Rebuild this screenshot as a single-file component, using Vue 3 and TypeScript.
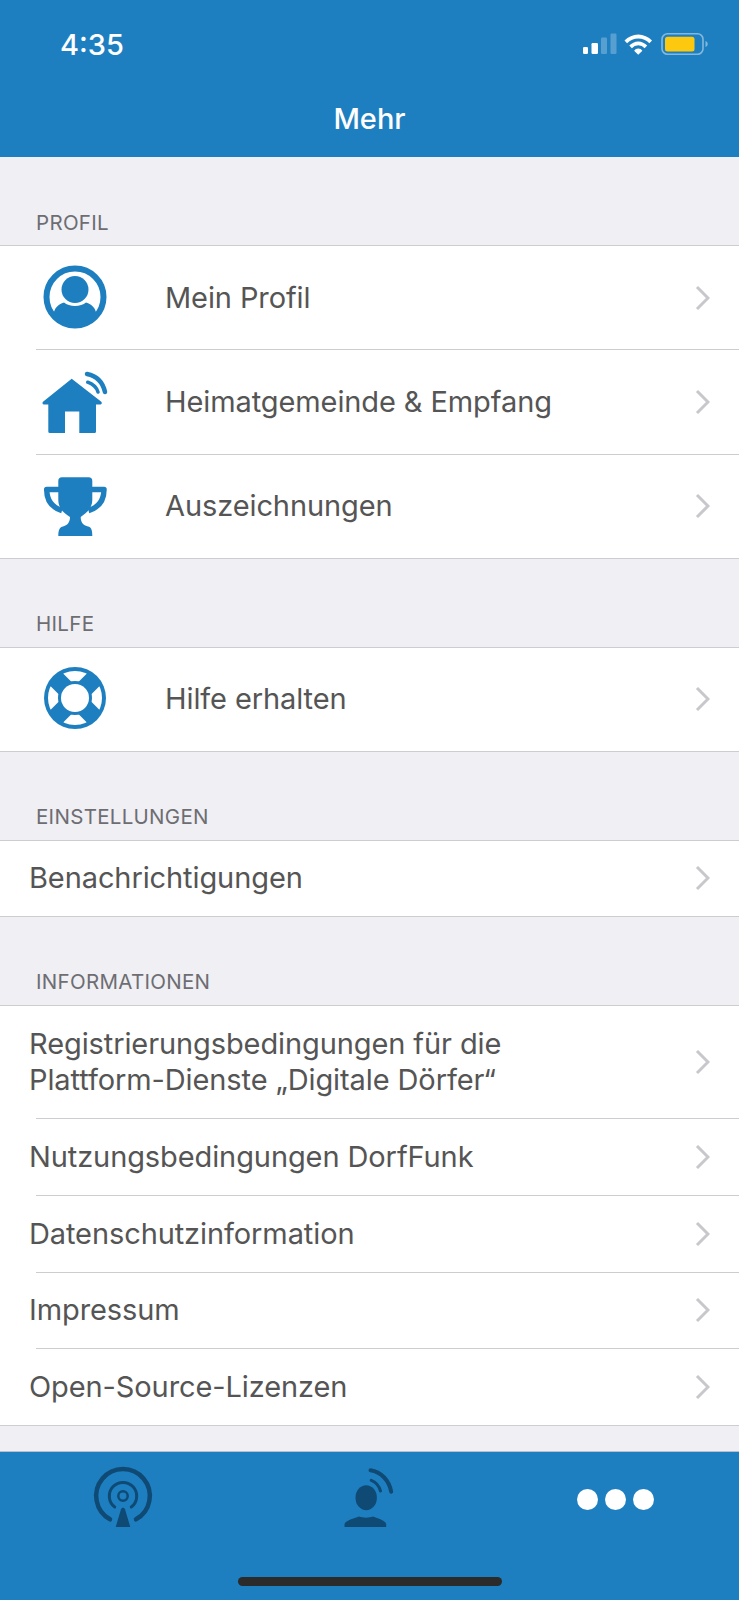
<template>
  <div class="screen">
    <header class="top">
      <div class="status">
        <span class="status__time">4:35</span>
        <svg class="status__icons" width="126" height="24" viewBox="0 0 126 24">
          <rect x="0" y="14" width="5" height="7" rx="1.2" fill="#fff" />
          <rect x="8.5" y="10" width="6.5" height="11" rx="1.2" fill="#fff" />
          <rect x="18" y="4.5" width="6" height="16.5" rx="1.2" fill="#fff" opacity="0.25" />
          <rect x="27.5" y="0.5" width="6" height="20.5" rx="1.2" fill="#fff" opacity="0.25" />
          <g transform="translate(-1.5 0)" fill="#fff">
            <path d="M43 7.5a19 19 0 0 1 27.5 0l-2.6 2.8a15.2 15.2 0 0 0-22.3 0z" />
            <path d="M47.8 12.6a12 12 0 0 1 17.9 0l-2.6 2.7a8.3 8.3 0 0 0-12.7 0z" />
            <path d="M52.6 17.7a5 5 0 0 1 8.3 0l-4.15 4.1z" />
          </g>
          <rect x="79" y="0.8" width="41" height="20.4" rx="5.5" fill="none" stroke="#fff" stroke-opacity="0.45" stroke-width="1.6" />
          <rect x="82" y="3.7" width="29.5" height="14.8" rx="2.5" fill="#fdc90e" />
          <path d="M122.5 8v6c1.4-.5 2.2-1.6 2.2-3s-.8-2.500-2.2-3z" fill="#fff" fill-opacity="0.45" />
        </svg>
      </div>
      <h1 class="top__title">Mehr</h1>
    </header>

    <main class="content">
      <section v-for="section in sections" :key="section.title">
        <h2 class="section-title">{{ section.title }}</h2>
        <ul class="group">
          <li
            v-for="row in section.rows"
            :key="row.label"
            class="row"
            :class="{ 'row--icon': row.icon, 'row--tall': row.label.includes('\n') }"
          >
            <svg v-if="row.icon === 'profile'" class="row__icon" viewBox="0 1 64 64">
              <circle cx="32" cy="32" r="28.5" fill="none" stroke="#1e7fc0" stroke-width="6" />
              <circle cx="32" cy="24.500" r="13.500" fill="#1e7fc0" />
              <path d="M10.500 50C11 43 15 39.500 21 37.500 26 42 38 42 43 37.500 49 39.500 53 43 53.500 50A27 27 0 0 1 10.500 50Z" fill="#1e7fc0" />
            </svg>
            <svg v-else-if="row.icon === 'home'" class="row__icon" viewBox="0 0 64 64">
              <path d="M28.700 8.800 58 31.500c1.500 1.500.7 3-1 3h-4V61.500a1.500 1.500 0 0 1-1.500 1.500H36.300V41.500H22V63H6.800a1.500 1.500 0 0 1-1.500-1.500V34.500h-4c-1.700 0-2.500-1.500-1-3Z" fill="#1e7fc0" />
              <path d="M44 4C54 6 60 13 62 22" fill="none" stroke="#1e7fc0" stroke-width="4.500" stroke-linecap="round" />
              <path d="M44.700 12.200C50 14 53.500 17.500 55 22" fill="none" stroke="#1e7fc0" stroke-width="3.500" stroke-linecap="round" />
            </svg>
            <svg v-else-if="row.icon === 'trophy'" class="row__icon" viewBox="0 0 64 64">
              <path d="M19 3.300H45.600A3.700 3.700 0 0 1 49.300 7V26C49.300 35 42 40 37.700 43 37.700 47 39 51 45 52.500 48 53 49.300 55.500 49.300 62H15.300C15.300 55.500 17 53 20 52.500 25.500 51 27 47 27 43 22 40 15.300 35 15.300 26V7A3.700 3.700 0 0 1 19 3.300Z" fill="#1e7fc0" />
              <path d="M16 15.500H3.700C3.700 27 9 33.500 19 36.500M48.500 15.500H61C61 27 55.500 33.500 45.500 36.500" fill="none" stroke="#1e7fc0" stroke-width="5.500" stroke-linejoin="round" />
            </svg>
            <svg v-else-if="row.icon === 'help'" class="row__icon" viewBox="0 1 64 64">
              <circle cx="32" cy="32" r="31" fill="#1e7fc0" />
              <circle cx="32" cy="32" r="22" fill="none" stroke="#fff" stroke-width="10" />
              <path d="M12 12 52 52M52 12 12 52" stroke="#1e7fc0" stroke-width="18" />
              <circle cx="32" cy="32" r="14" fill="#fff" />
            </svg>
            <span class="row__label">{{ row.label }}</span>
            <svg class="row__chevron" width="15" height="26" viewBox="0 0 15 26">
              <path d="M2 2l11 11L2 24" fill="none" stroke="#c7c7cc" stroke-width="3" />
            </svg>
          </li>
        </ul>
      </section>
    </main>

    <footer class="tabs">
      <div class="tabs__row">
        <button class="tab" type="button" aria-label="Funk">
          <svg width="64" height="64" viewBox="0 0 64 64">
            <path d="M19 55.300A26.800 26.800 0 1 1 45 55.300" fill="none" stroke="#0f4a75" stroke-width="4.500" stroke-linecap="round" />
            <path d="M23.700 43A13.700 13.700 0 1 1 40.300 43" fill="none" stroke="#0f4a75" stroke-width="3" stroke-linecap="round" />
            <circle cx="32" cy="32" r="4.700" fill="none" stroke="#0f4a75" stroke-width="2.500" />
            <path d="M32 43.700c1 0 1.600.6 2 1.600L39.300 63H24.700L30 45.300c.4-1 1-1.600 2-1.600Z" fill="#0f4a75" />
          </svg>
        </button>
        <button class="tab" type="button" aria-label="Meine Beiträge">
          <svg width="64" height="64" viewBox="0 0 64 64">
            <ellipse cx="29.200" cy="33.700" rx="10.700" ry="12.500" fill="#0f4a75" />
            <path d="M7.500 63V60C9 56 17 54.500 22 52.500 26 54 32 54 36 52.500 41 54.500 48 56 49.200 60V63Z" fill="#0f4a75" />
            <path d="M33.500 6.300C44 8 52 16 54.200 27.700" fill="none" stroke="#0f4a75" stroke-width="4" stroke-linecap="round" />
            <path d="M34.200 16.300C39 18 42 21.500 43.500 27" fill="none" stroke="#0f4a75" stroke-width="3" stroke-linecap="round" />
          </svg>
        </button>
        <button class="tab" type="button" aria-label="Mehr">
          <span class="tab__dots"><i /><i /><i /></span>
        </button>
      </div>
      <div class="home-bar" />
    </footer>
  </div>
</template>

<script setup lang="ts">
type IconName = 'profile' | 'home' | 'trophy' | 'help'

interface Row {
  label: string
  icon?: IconName
}

interface Section {
  title: string
  rows: Row[]
}

const sections: Section[] = [
  {
    title: 'PROFIL',
    rows: [
      { label: 'Mein Profil', icon: 'profile' },
      { label: 'Heimatgemeinde & Empfang', icon: 'home' },
      { label: 'Auszeichnungen', icon: 'trophy' },
    ],
  },
  {
    title: 'HILFE',
    rows: [{ label: 'Hilfe erhalten', icon: 'help' }],
  },
  {
    title: 'EINSTELLUNGEN',
    rows: [{ label: 'Benachrichtigungen' }],
  },
  {
    title: 'INFORMATIONEN',
    rows: [
      { label: 'Registrierungsbedingungen für die\nPlattform-Dienste „Digitale Dörfer“' },
      { label: 'Nutzungsbedingungen DorfFunk' },
      { label: 'Datenschutzinformation' },
      { label: 'Impressum' },
      { label: 'Open-Source-Lizenzen' },
    ],
  },
]
</script>

<style scoped>
.screen {
  width: 739px;
  height: 1600px;
  display: flex;
  flex-direction: column;
  overflow: hidden;
  background: #efeff4;
  font-family: Inter, Roboto, "Liberation Sans", sans-serif;
}

.top {
  height: 157px;
  flex-shrink: 0;
  background: #1e7fc0;
  color: #fff;
  box-sizing: border-box;
  padding-top: 29px;
}

.status {
  height: 30px;
  display: flex;
  align-items: center;
  justify-content: space-between;
  padding: 0 30px 0 60px;
}

.status__time {
  font-size: 29px;
  font-weight: 500;
}

.status__icons {
  margin-top: 2px;
}

.top__title {
  margin: 43px 0 0;
  font-size: 29px;
  line-height: 34px;
  font-weight: 500;
  text-align: center;
}

.content {
  flex: 1;
  min-height: 0;
}

.section-title {
  height: 88px;
  margin: 0;
  box-sizing: border-box;
  padding: 0 0 11.5px 36px;
  display: flex;
  align-items: flex-end;
  font-size: 20.5px;
  line-height: 22px;
  font-weight: 400;
  letter-spacing: 0.3px;
  color: #6d6d72;
}

.group {
  margin: 0;
  padding: 0;
  list-style: none;
  background: #fff;
  border-top: 1px solid #cdcdd1;
  border-bottom: 1px solid #cdcdd1;
}

.row {
  position: relative;
  height: 75.8px;
  display: flex;
  align-items: center;
  padding: 0 29px;
  color: #555;
  font-size: 29px;
  letter-spacing: -0.1px;
  line-height: 36px;
}

.row:only-child {
  height: 75px;
}

.row--icon {
  height: 103.33px;
  padding-left: 43px;
}

.row--icon:only-child {
  height: 103px;
}

.row--tall {
  height: 112px;
}

.row + .row {
  margin-top: 1px;
}

.row + .row::before {
  content: "";
  position: absolute;
  top: -1px;
  left: 36px;
  right: 0;
  height: 1px;
  background: #cdcdd1;
}

.row__icon {
  width: 64px;
  height: 64px;
  flex-shrink: 0;
  margin-right: 58px;
  overflow: visible;
}

.row__label {
  flex: 1;
  white-space: pre-line;
}

.row__chevron {
  flex-shrink: 0;
}

.tabs {
  height: 149px;
  flex-shrink: 0;
  box-sizing: border-box;
  background: #1e7fc0;
  border-top: 1px solid #b9bfce;
  padding-top: 12px;
  display: flex;
  flex-direction: column;
  align-items: center;
}

.tabs__row {
  width: 100%;
  display: grid;
  grid-template-columns: repeat(3, 1fr);
}

.tab {
  height: 64px;
  padding: 0;
  border: 0;
  background: none;
  display: flex;
  align-items: center;
  justify-content: center;
}

.tab__dots {
  display: flex;
  gap: 7px;
  margin-top: 6px;
}

.tab__dots i {
  width: 21px;
  height: 21px;
  border-radius: 50%;
  background: #fff;
}

.home-bar {
  width: 264px;
  height: 9px;
  margin-top: 49px;
  border-radius: 5px;
  background: #2b2b2b;
}
</style>
